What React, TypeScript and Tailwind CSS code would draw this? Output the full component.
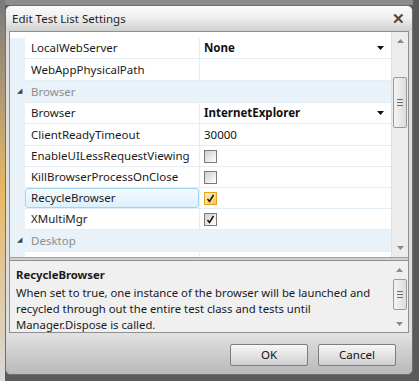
import React from "react"

const font = { fontFamily: '"Noto Sans", "Open Sans", sans-serif' }

type Row =
  | { kind: "cat"; label: string; h: number }
  | { kind: "prop"; name: string; h: number; value?: string; bold?: boolean; drop?: boolean; check?: "off" | "on" | "hot"; selected?: boolean }

const rows: Row[] = [
  { kind: "prop", name: "LocalWebServer", h: 21, value: "None", bold: true, drop: true },
  { kind: "prop", name: "WebAppPhysicalPath", h: 22 },
  { kind: "cat", label: "Browser", h: 22 },
  { kind: "prop", name: "Browser", h: 21, value: "InternetExplorer", bold: true, drop: true },
  { kind: "prop", name: "ClientReadyTimeout", h: 22, value: "30000" },
  { kind: "prop", name: "EnableUILessRequestViewing", h: 21, check: "off" },
  { kind: "prop", name: "KillBrowserProcessOnClose", h: 21, check: "off" },
  { kind: "prop", name: "RecycleBrowser", h: 21, check: "hot", selected: true },
  { kind: "prop", name: "XMultiMgr", h: 21, check: "on" },
  { kind: "cat", label: "Desktop", h: 22 },
]

const Check = ({ state }: { state: "off" | "on" | "hot" }) => (
  <div
    className={
      "w-[13px] h-[13px] border flex items-center justify-center " +
      (state === "hot"
        ? "border-[#e3a21a] bg-gradient-to-br from-[#fff3c4] to-[#f7c64b]"
        : "border-[#7a7a7a] bg-gradient-to-br from-[#cfcfcf] to-[#ffffff]")
    }
  >
    {state !== "off" && (
      <svg width="9" height="9" viewBox="0 0 9 9">
        <path d="M1.5 5 L3.5 7.5 L7.5 1" stroke="#111" strokeWidth="1.5" fill="none" />
      </svg>
    )}
  </div>
)

const Arrow = ({ up, color = "#8a8a8a" }: { up?: boolean; color?: string }) => (
  <svg width="7" height="4" viewBox="0 0 7 4">
    <path d={up ? "M0 4 L3.5 0 L7 4 Z" : "M0 0 L7 0 L3.5 4 Z"} fill={color} />
  </svg>
)

const Thumb = ({ h }: { h: number }) => (
  <div
    className="w-[14px] rounded-[2px] border border-[#9a9a9a] bg-gradient-to-r from-[#f4f4f4] to-[#dcdcdc] flex flex-col items-center justify-center gap-[2px]"
    style={{ height: h }}
  >
    <div className="w-[6px] h-px bg-[#707070]" />
    <div className="w-[6px] h-px bg-[#707070]" />
    <div className="w-[6px] h-px bg-[#707070]" />
  </div>
)

export default function App() {
  return (
    <div className="w-[419px] h-[381px] overflow-hidden bg-[#5a5a5a] flex" style={font}>
      <div className="w-[5px] h-full bg-gradient-to-b from-[#7a7a7a] via-[#e8b860] to-[#d8d8d8]" />
      <div className="flex flex-col">
        <div className="h-[5px] bg-[#8c8c8c]" />
        <div className="w-[408px] h-[370px] rounded-[6px] border border-[#6f6f6f] bg-[#dedede] flex flex-col overflow-hidden">
          {/* title bar */}
          <div className="h-[25px] shrink-0 bg-gradient-to-b from-[#fbfbfb] via-[#eeeeee] to-[#cfcfcf] flex items-center justify-between pl-[6px] pr-[7px]">
            <span className="text-[11.5px] text-[#1e1e1e]">Edit Test List Settings</span>
            <span className="text-[15px] font-bold text-[#4a4a4a] leading-none">✕</span>
          </div>

          {/* content */}
          <div className="mx-[3px] border border-[#8f8f8f] bg-[#ececec] flex flex-col">
            {/* property grid */}
            <div className="h-[226px] flex border-b border-[#a0a0a0] bg-white">
              <div className="flex-1 flex flex-col pt-[6px] overflow-hidden">
                {rows.map((r, i) =>
                  r.kind === "cat" ? (
                    <div key={i} className="shrink-0 flex items-center bg-[#e9f1f9] border-b border-[#e4eef8]" style={{ height: r.h }}>
                      <span className="w-[15px] flex justify-center text-[7px] text-[#444] pl-[4px]">◢</span>
                      <span className="ml-[6px] text-[11.5px] text-[#8e8e8e]">{r.label}</span>
                    </div>
                  ) : (
                    <div key={i} className="shrink-0 flex" style={{ height: r.h }}>
                      <div className="w-[15px] bg-[#e9f1f9]" />
                      <div className="w-[175px] border-b border-r border-[#e2edf8] flex items-center">
                        {r.selected ? (
                          <div className="h-[20px] w-full rounded-[3px] border border-[#9fd4f2] bg-gradient-to-b from-[#f4fbff] to-[#dcf0fc] flex items-center pl-[5px] text-[11.5px] text-[#1a1a1a]">
                            {r.name}
                          </div>
                        ) : (
                          <span className="pl-[6px] text-[11.5px] text-[#1a1a1a]">{r.name}</span>
                        )}
                      </div>
                      <div className="flex-1 border-b border-[#e2edf8] flex items-center pl-[4px] pr-[7px] justify-between">
                        {r.check ? (
                          <Check state={r.check} />
                        ) : (
                          <span className={"text-[11.5px] text-[#111] " + (r.bold ? "font-bold" : "")}>{r.value}</span>
                        )}
                        {r.drop && <Arrow color="#111" />}
                      </div>
                    </div>
                  )
                )}
                <div className="h-[21px] shrink-0 flex">
                  <div className="w-[15px] bg-[#e9f1f9]" />
                  <div className="w-[175px] border-r border-[#e2edf8]" />
                </div>
              </div>
              {/* scrollbar */}
              <div className="w-[17px] bg-[#ececec] border-l border-[#e0e0e0] flex flex-col items-center">
                <div className="h-[18px] flex items-center justify-center"><Arrow up /></div>
                <div className="mt-[27px]"><Thumb h={51} /></div>
                <div className="flex-1" />
                <div className="h-[18px] flex items-center justify-center"><Arrow /></div>
              </div>
            </div>

            {/* splitter */}
            <div className="h-[2px] bg-[#d0d0d0]" />

            {/* description */}
            <div className="h-[72px] flex bg-[#f0f0f0] border-t border-[#8f8f8f] overflow-hidden">
              <div className="flex-1 pl-[6px] pt-[6px] text-[11.3px] text-[#1a1a1a] leading-[16px] whitespace-nowrap">
                <div className="font-bold">RecycleBrowser</div>
                <div className="mt-[2px]">When set to true, one instance of the browser will be launched and</div>
                <div>recycled through out the entire test class and tests until</div>
                <div>Manager.Dispose is called.</div>
              </div>
              <div className="w-[17px] flex flex-col items-center">
                <div className="h-[18px] flex items-center justify-center"><Arrow up /></div>
                <Thumb h={31} />
                <div className="flex-1" />
                <div className="h-[16px] flex items-center justify-center"><Arrow /></div>
              </div>
            </div>
          </div>

          {/* buttons */}
          <div className="flex-1 bg-gradient-to-b from-[#e2e2e2] to-[#b9b9b9] flex items-start justify-end gap-[10px] pt-[11px] pr-[16px]">
            <button className="w-[78px] h-[22px] border border-[#7e7e7e] rounded-[2px] bg-gradient-to-b from-[#f6f6f6] via-[#e4e4e4] to-[#cfcfcf] text-[11.5px] text-[#111]">OK</button>
            <button className="w-[78px] h-[22px] border border-[#7e7e7e] rounded-[2px] bg-gradient-to-b from-[#f6f6f6] via-[#e4e4e4] to-[#cfcfcf] text-[11.5px] text-[#111]">Cancel</button>
          </div>
        </div>
      </div>
    </div>
  )
}
